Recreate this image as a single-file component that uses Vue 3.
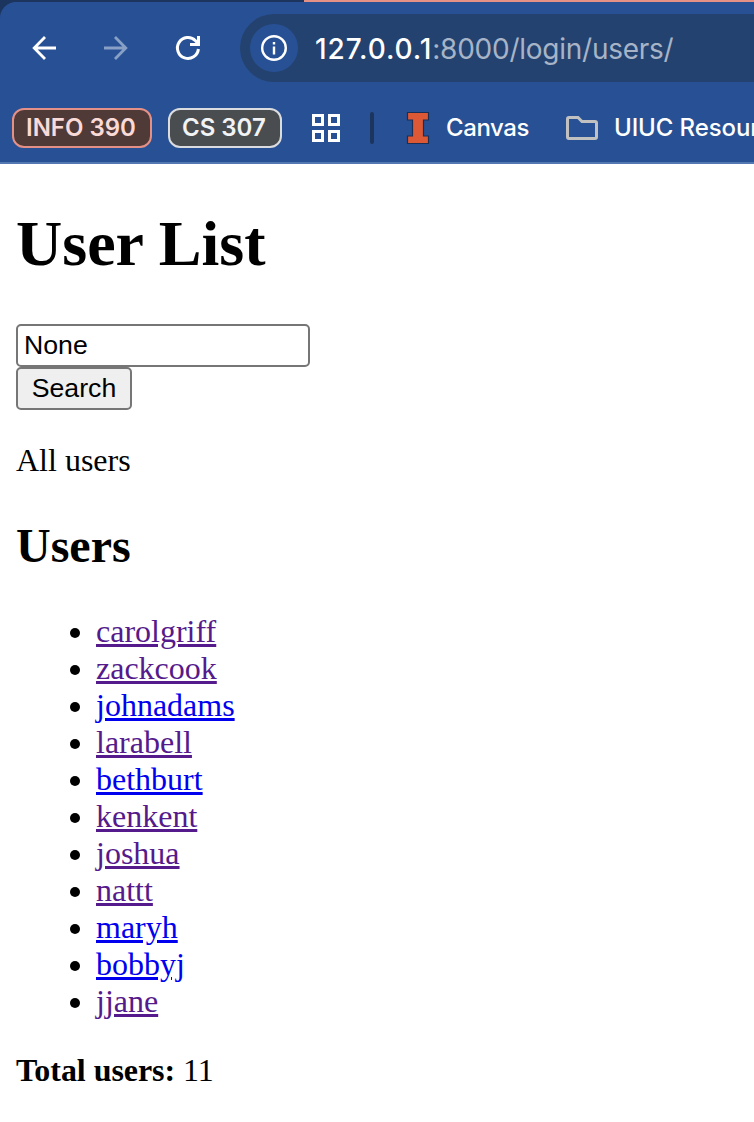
<script setup>
const users = [
  { name: 'carolgriff', visited: true },
  { name: 'zackcook', visited: true },
  { name: 'johnadams', visited: false },
  { name: 'larabell', visited: true },
  { name: 'bethburt', visited: false },
  { name: 'kenkent', visited: true },
  { name: 'joshua', visited: true },
  { name: 'nattt', visited: true },
  { name: 'maryh', visited: false },
  { name: 'bobbyj', visited: false },
  { name: 'jjane', visited: true },
]
</script>

<template>
  <div class="window">
    <header class="chrome">
      <div class="tabstrip"><div class="group-line"></div></div>
      <div class="surface">
        <div class="toolbar">
          <svg class="nav" viewBox="0 0 32 32"><path d="M28 16H7M17 4.900L6.200 16l10.800 11.100" fill="none" stroke="#fff" stroke-width="2.800" /></svg>
          <svg class="nav" viewBox="0 0 32 32"><path d="M4 16h21M15 4.900L25.800 16l-10.800 11.100" fill="none" stroke="#889fc6" stroke-width="2.800" /></svg>
          <svg class="nav" viewBox="0 0 32 32">
            <path d="M26.400 17A10.500 10.500 0 1 1 23.500 8.700L26 11.500" fill="none" stroke="#fff" stroke-width="3" />
            <path d="M26.500 4v8.500H18" fill="none" stroke="#fff" stroke-width="3" />
          </svg>
          <div class="omnibox">
            <span class="info">
              <svg viewBox="0 0 28 28" width="28" height="28">
                <circle cx="14" cy="14" r="11.800" fill="none" stroke="#fff" stroke-width="2.400" />
                <path d="M14 12.500v8M14 8v2.500" stroke="#fff" stroke-width="2.400" />
              </svg>
            </span>
            <span class="url"><span class="host">127.0.0.1</span><span class="path">:8000/login/users/</span></span>
          </div>
        </div>
        <div class="bookmarks">
          <span class="chip coral"><span class="chip-text">INFO 390</span></span>
          <span class="chip grey"><span class="chip-text">CS 307</span></span>
          <svg class="apps" viewBox="0 0 28 28" fill="none" stroke="#fff" stroke-width="3">
            <path d="M1.500 1.500h9v9h-9zM17.500 1.500h9v9h-9zM1.500 17.500h9v9h-9zM17.500 17.500h9v9h-9z" />
          </svg>
          <span class="divider"></span>
          <svg class="block-i" viewBox="0 0 24 32">
            <path d="M1.500.5h21v7.500h-5v16h5v7.500h-21V24h5V8h-5z" fill="#dd5834" stroke="#1b2f55" stroke-width="1.200" />
          </svg>
          <span class="label canvas">Canvas</span>
          <svg class="folder" viewBox="0 0 32 24">
            <path d="M3 1.500h9l4 4h13q1.500 0 1.500 1.500v14q0 1.500-1.500 1.500H3q-1.500 0-1.500-1.500V3q0-1.500 1.500-1.500z" fill="none" stroke="#c1c1c1" stroke-width="3" />
          </svg>
          <span class="label">UIUC Resources</span>
        </div>
      </div>
    </header>
    <main class="page">
      <h1>User List</h1>
      <form @submit.prevent>
        <input type="text" value="None" />
        <button type="submit">Search</button>
      </form>
      <p>All users</p>
      <h2>Users</h2>
      <ul>
        <li v-for="u in users" :key="u.name"><a href="#" :class="{ visited: u.visited }">{{ u.name }}</a></li>
      </ul>
      <p class="total"><strong>Total users:</strong> 11</p>
    </main>
  </div>
</template>

<style>
body {
  margin: 0;
  background: #fff;
  overflow: hidden;
}
</style>

<style scoped>
.window {
  width: 754px;
  height: 1122px;
  overflow: hidden;
  background: #fff;
}
.chrome {
  height: 164px;
  background: #1c355e;
  font-family: Inter, "Liberation Sans", sans-serif;
}
.tabstrip {
  height: 2px;
  padding-left: 304px;
}
.group-line {
  height: 2px;
  background: #e59086;
}
.surface {
  box-sizing: border-box;
  height: 162px;
  background: #285195;
  border-bottom: 2px solid #5479b2;
  border-top-left-radius: 16px;
}
.toolbar {
  display: flex;
  align-items: center;
  height: 92px;
  padding-left: 28px;
}
.nav {
  width: 32px;
  height: 32px;
  margin-right: 40px;
  flex: none;
}
.omnibox {
  display: flex;
  align-items: center;
  box-sizing: border-box;
  flex: 1;
  height: 68px;
  margin-left: -4px;
  padding-left: 10px;
  background: #24426f;
  border-radius: 34px 0 0 34px;
}
.info {
  display: flex;
  align-items: center;
  justify-content: center;
  width: 48px;
  height: 48px;
  margin-right: 17px;
  border-radius: 50%;
  background: #285195;
}
.url {
  padding-top: 1px;
  font-size: 28px;
  line-height: 34px;
  white-space: nowrap;
}
.host {
  color: #fff;
  font-weight: 500;
  letter-spacing: 0.9px;
}
.path {
  color: #a7b4c7;
  letter-spacing: -0.25px;
}
.bookmarks {
  display: flex;
  align-items: center;
  height: 68px;
  padding-left: 12px;
  white-space: nowrap;
}
.chip {
  display: flex;
  align-items: center;
  box-sizing: border-box;
  height: 40px;
  margin-right: 16px;
  padding: 0 0 1px 12px;
  border: 2px solid;
  border-radius: 12px;
  font-size: 24px;
  font-weight: 600;
  flex: none;
}
.coral {
  width: 140px;
  background: #4f3a38;
  border-color: #e59086;
  color: #fadad6;
}
.grey {
  width: 114px;
  margin-right: 30px;
  background: #4a4d50;
  border-color: #dadce0;
  color: #f1f3f4;
}
.apps {
  width: 28px;
  height: 28px;
  flex: none;
}
.divider {
  width: 4px;
  height: 32px;
  margin: 0 32px 0 30px;
  border-radius: 2px;
  background: #1c355e;
  flex: none;
}
.block-i {
  width: 24px;
  height: 32px;
  margin-right: 16px;
  flex: none;
}
.label {
  padding-bottom: 1px;
  color: #fff;
  font-size: 24px;
  font-weight: 500;
  letter-spacing: -0.1px;
}
.canvas {
  width: 120px;
  flex: none;
  letter-spacing: -0.4px;
}
.folder {
  width: 32px;
  height: 24px;
  margin-right: 16px;
  flex: none;
}
.page {
  display: flow-root;
  padding: 0 16px;
  color: #000;
  font-family: "Liberation Serif", "Times New Roman", serif;
  font-size: 32px;
  line-height: 37px;
}
h1 {
  margin: 43px 0;
  font-size: 64px;
  line-height: 74px;
}
form {
  display: flex;
  flex-direction: column;
  align-items: flex-start;
}
input,
button {
  box-sizing: border-box;
  height: 43px;
  margin: 0;
  border: 2px solid #767676;
  border-radius: 5px;
  font-family: "Liberation Sans", Arial, sans-serif;
  font-size: 26.67px;
  line-height: 31px;
  color: #000;
}
input {
  width: 294px;
  padding: 2px 6px;
  background: #fff;
}
button {
  width: 116px;
  padding: 2px 0;
  background: #efefef;
}
p {
  margin: 32px 0;
}
h2 {
  margin: 39px 0 40px;
  font-size: 48px;
  line-height: 55px;
}
ul {
  margin: 40px 0 32px;
  padding-left: 80px;
}
a {
  color: #0000ee;
  text-decoration-thickness: 3px;
  text-underline-offset: 2px;
}
a.visited {
  color: #551a8b;
}
.total {
  letter-spacing: -0.05px;
}
</style>
